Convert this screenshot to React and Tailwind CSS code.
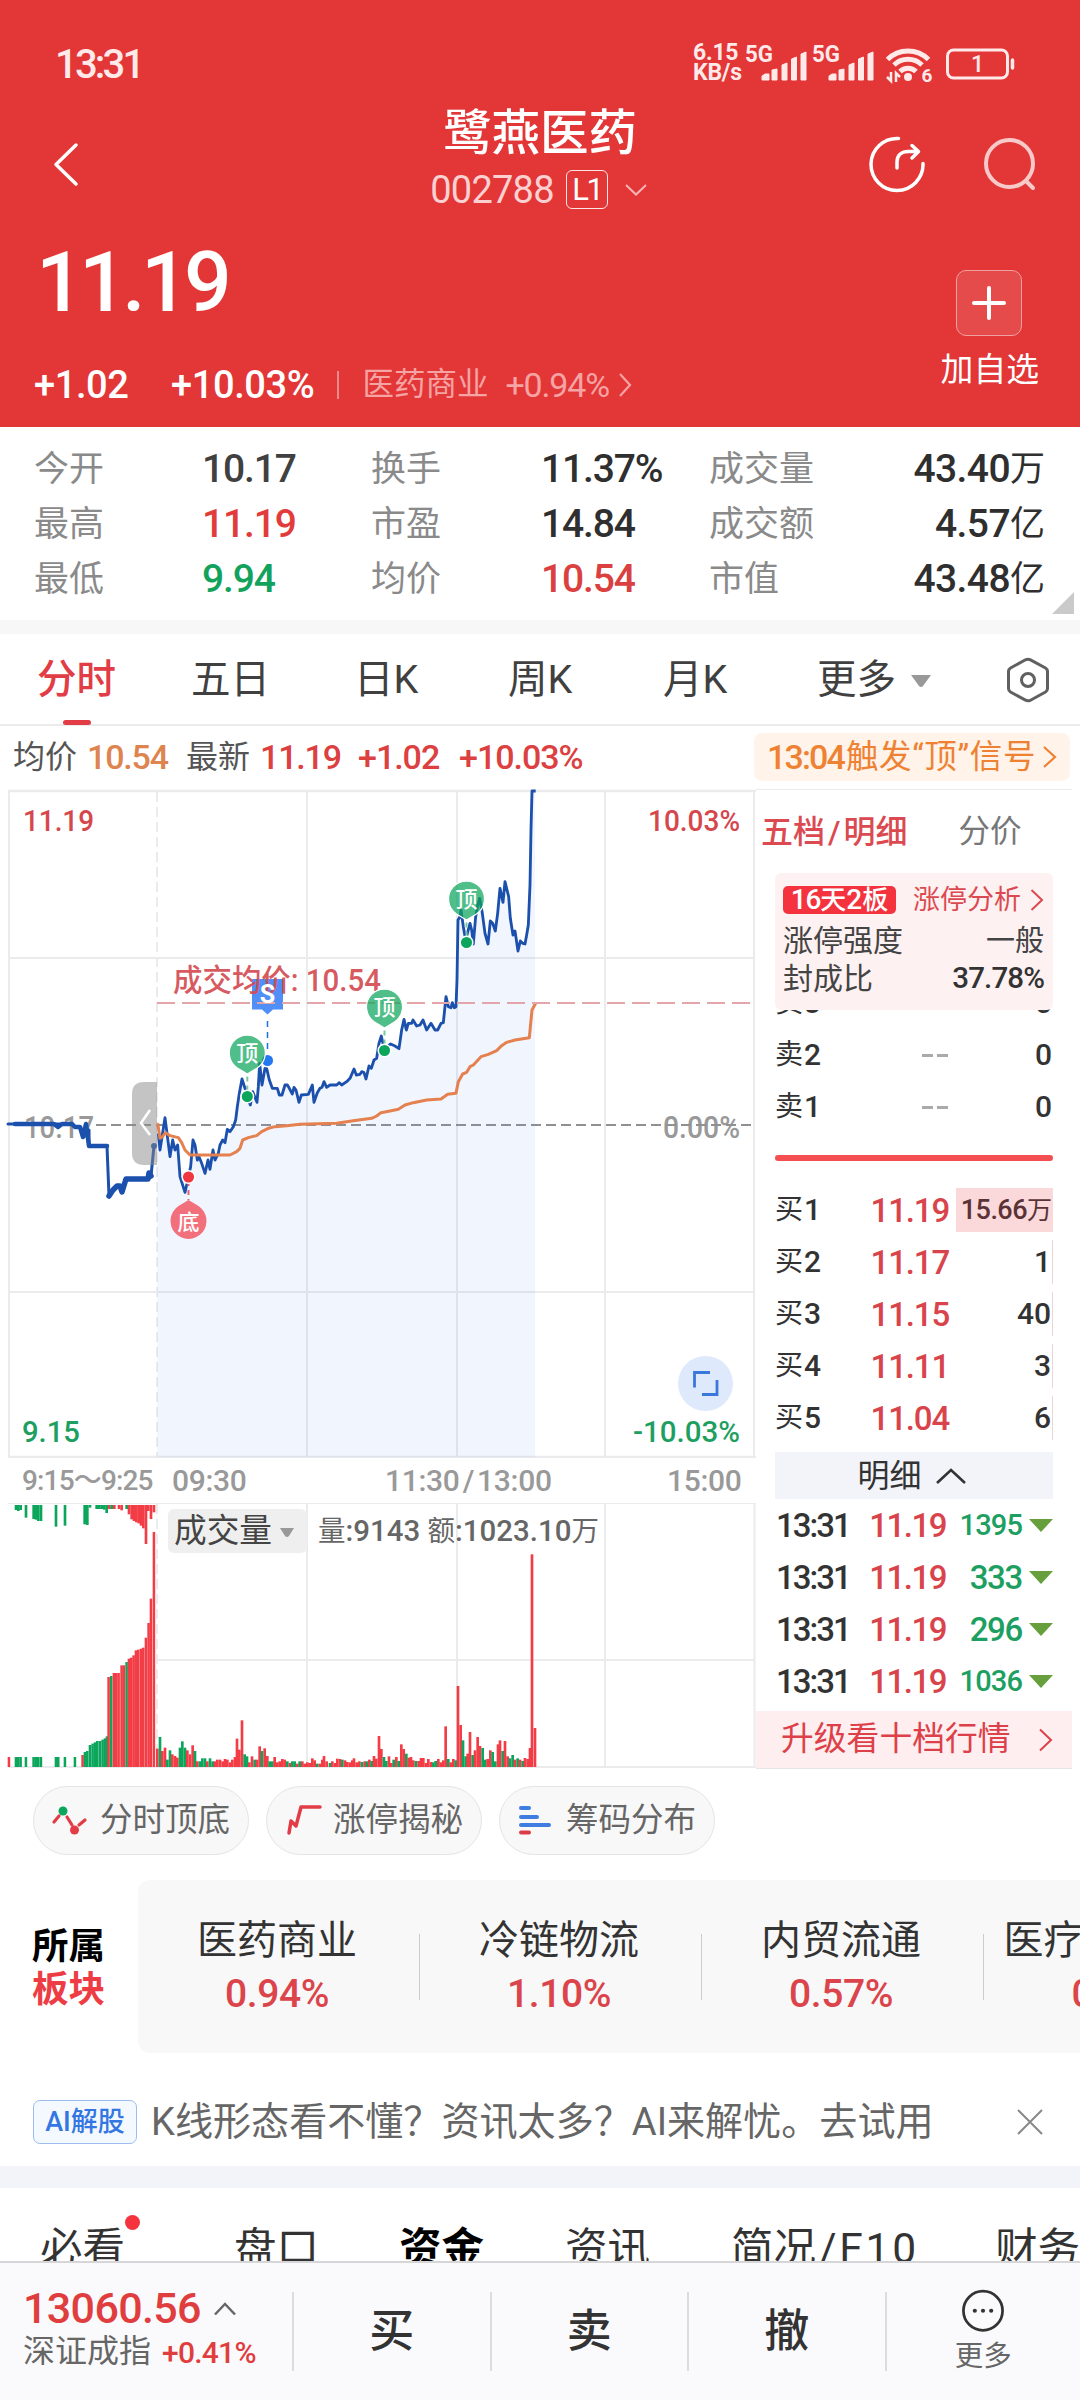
import React from "react";

const RED = "#f23c46";
const GREEN = "#0ca55c";

function Signal() {
  return (
    <svg className="overflow-visible" width="62" height="36" viewBox="0 0 62 36" fill="#ffe9e9">
      <text x="0" y="16" fontSize="23" fontWeight="700" textLength="28" lengthAdjust="spacingAndGlyphs">5G</text>
      <path d="M17 30l3-2h4v6h-7zM27 24l5-1v11h-5zM37 19l5-2v17h-5zM46.500 13l5-2v23h-5zM56 8l5-2v28h-5z" stroke="#ffe9e9" strokeWidth="1" strokeLinejoin="round" />
    </svg>
  );
}

function StatusBar() {
  return (
    <div className="flex h-[100px] items-start text-[#ffe9e9]">
      <span className="ml-[55px] mt-[45px] w-[119px] text-[40px] font-medium leading-none tracking-[-0.07em]">13:31</span>
      <div className="ml-[519px] mt-[43px] w-[52px] text-[23px] font-bold leading-[20px]">
        <div className="tracking-[-0.01em]">6.15</div>
        <div className="tracking-[-0.01em]">KB/s</div>
      </div>
      <div className="mt-[46px] flex gap-[5px]">
        <Signal />
        <Signal />
      </div>
      <svg className="ml-[11px] mt-[46px] overflow-visible" width="50" height="38" viewBox="0 0 50 38" fill="none" stroke="#ffe9e9">
        <path d="M2.500 13.500a29 29 0 0 1 41 0" strokeWidth="5" />
        <path d="M9 19a20 20 0 0 1 28 0" strokeWidth="5" />
        <path d="M15 25.500a11.500 11.500 0 0 1 16 0" strokeWidth="5" />
        <circle cx="23" cy="31" r="4" fill="#ffe9e9" stroke="none" />
        <path d="M6 26v9l-4-4M11 36v-9l4 4" strokeWidth="2.500" />
        <text x="36.500" y="35.500" fill="#ffe9e9" stroke="none" fontSize="19" fontWeight="700">6</text>
      </svg>
      <svg className="ml-[11px] mt-[48px] overflow-visible" width="72" height="32" viewBox="0 0 72 32" fill="none" stroke="#ffe9e9">
        <rect x="1.500" y="2" width="60" height="28" rx="6" strokeWidth="3" />
        <path d="M66.500 12v8" strokeWidth="3.500" strokeLinecap="round" />
        <text x="31.500" y="24" textAnchor="middle" fontSize="23" fontWeight="500" fill="#ffe9e9" stroke="none">1</text>
      </svg>
    </div>
  );
}

function Header() {
  return (
    <header className="flex h-[427px] flex-col bg-[#e33637] text-white">
      <StatusBar />
      <div className="flex h-[130px] items-start">
        <svg className="ml-[50px] mt-[42px]" width="30" height="46" viewBox="0 0 30 46" fill="none" stroke="#fff" strokeWidth="3.500" strokeLinecap="round" strokeLinejoin="round">
          <path d="M26 3L6 22.500L26 42" />
        </svg>
        <div className="ml-[299px] w-[322px] pt-[10px]">
          <div className="text-center text-[48.500px] font-medium leading-none">鹭燕医药</div>
          <div className="mt-[10px] flex h-[42px] items-center justify-center">
            <span className="text-[38px] leading-none tracking-[-0.02em] text-[#fbd0d0]">002788</span>
            <span className="ml-[12px] flex h-[39px] w-[42px] items-center justify-center rounded-[6px] border-[1.500px] border-[#fde4e4] text-[31px] leading-none tracking-[-0.08em]">L1</span>
            <svg className="ml-[16px] mr-[2px]" width="24" height="14" viewBox="0 0 24 14" fill="none" stroke="#f5b3b3" strokeWidth="2">
              <path d="M2 2l10 9.500L22 2" />
            </svg>
          </div>
        </div>
        <svg className="ml-[168px] mt-[35px]" width="58" height="58" viewBox="0 0 58 58" fill="none" stroke="#fff" strokeWidth="3.500" strokeLinecap="round" strokeLinejoin="round">
          <path d="M29.500 3.500A26 26 0 1 0 54 28.500" />
          <path d="M28 33v-6c0-7 5-10.500 11-10.500h10M43 10.500l6.500 6L43 23" />
        </svg>
        <svg className="ml-[56px] mt-[37px]" width="56" height="56" viewBox="0 0 56 56" fill="none" stroke="#f8c9c9" strokeWidth="4" strokeLinecap="round">
          <circle cx="26.500" cy="26.500" r="23.500" />
          <path d="M43 44l7 7" />
        </svg>
      </div>
      <div className="flex h-[197px] justify-between">
        <div className="pl-[34px] pt-[11px]">
          <div className="ml-[2px] text-[84px] font-medium leading-none tracking-[-0.055em]">11.19</div>
          <div className="mt-[39px] flex h-[42px] items-center text-[38px] leading-none">
            <span className="w-[137px] font-medium tracking-[-0.01em]">+1.02</span>
            <span className="w-[166px] font-medium tracking-[-0.01em]">+10.03%</span>
            <span className="h-[28px] w-[1.500px] bg-[#ee8a8a]" />
            <span className="ml-[24px] text-[31.500px] text-[#f5a3a3]">医药商业</span>
            <span className="ml-[17px] text-[34px] tracking-[-0.035em] text-[#f5a3a3]">+0.94%</span>
            <svg className="ml-[8px]" width="16" height="26" viewBox="0 0 16 26" fill="none" stroke="#f5a3a3" strokeWidth="2.200">
              <path d="M3 2l10 11L3 24" />
            </svg>
          </div>
        </div>
        <div className="mr-[41px] flex flex-col items-center pt-[40px]">
          <div className="mr-[2px] flex h-[66px] w-[66px] items-center justify-center rounded-[10px] border-[1.500px] border-[#f1a0a0] bg-[#e64b4c]">
            <svg width="34" height="34" viewBox="0 0 34 34" stroke="#fff" strokeWidth="4" strokeLinecap="round">
              <path d="M17 2v30M2 17h30" />
            </svg>
          </div>
          <div className="mt-[18px] text-[32.800px] leading-none">加自选</div>
        </div>
      </div>
    </header>
  );
}

function Stats() {
  const rows = [
    ["今开", "10.17", "text-[#404040]", "换手", "11.37%", "text-[#2f2f2f]", "成交量", "43.40", "万"],
    ["最高", "11.19", "text-[#e23b3b]", "市盈", "14.84", "text-[#2f2f2f]", "成交额", "4.57", "亿"],
    ["最低", "9.94", "text-[#12a25c]", "均价", "10.54", "text-[#db4040]", "市值", "43.48", "亿"],
  ];
  return (
    <section className="relative h-[193px] pt-[15px]">
      {rows.map((r) => (
        <div key={r[0]} className="flex h-[55px] items-center pl-[34px] pr-[35px] text-[35px] leading-none text-[#8a8a8a]">
          <span className="w-[168px]">{r[0]}</span>
          <span className={"w-[169px] text-[39px] font-medium tracking-[-0.03em] " + r[2]}>{r[1]}</span>
          <span className="w-[170px]">{r[3]}</span>
          <span className={"w-[168px] text-[39px] font-medium tracking-[-0.03em] " + r[5]}>{r[4]}</span>
          <span>{r[6]}</span>
          <span className="ml-auto flex items-center text-[#2f2f2f]">
            <span className="text-[39px] font-medium tracking-[-0.015em]">{r[7]}</span>
            {r[8]}
          </span>
        </div>
      ))}
      <svg className="absolute bottom-[6px] right-[6px]" width="22" height="22" viewBox="0 0 22 22">
        <path d="M22 0v22H0z" fill="#cacaca" />
      </svg>
    </section>
  );
}

function PeriodTabs() {
  return (
    <nav className="flex h-[92px] items-start border-b-2 border-[#ebebeb] pl-[37px] text-[39.500px] leading-none text-[#404040]">
      <div className="flex h-[91px] w-[154px] flex-col pt-[26px] font-medium text-[#e23c46]">
        分时
        <span className="ml-[26px] mt-auto h-[5px] w-[28px] rounded-full bg-[#e23c46]" />
      </div>
      <span className="w-[163px] pt-[26px]">五日</span>
      <span className="w-[154px] pt-[26px]">日K</span>
      <span className="w-[155px] pt-[26px]">周K</span>
      <span className="w-[154px] pt-[26px]">月K</span>
      <span className="pt-[26px]">更多</span>
      <svg className="ml-[14px] mt-[40px]" width="22" height="14" viewBox="0 0 22 14">
        <path d="M1 1h20l-8 11q-2 2-4 0z" fill="#999" />
      </svg>
      <svg className="ml-[74px] mt-[23px]" width="44" height="46" viewBox="0 0 44 46" fill="none" stroke="#606060" strokeWidth="3">
        <path d="M19.500 2.800q2.500-1.300 5 0L39.500 11q2 1.200 2 3.500v17q0 2.300-2 3.500l-15 8.200q-2.500 1.300-5 0L4.500 35q-2-1.200-2-3.500v-17q0-2.300 2-3.500z" />
        <circle cx="22" cy="23" r="6.500" />
      </svg>
    </nav>
  );
}

function InfoRow() {
  return (
    <div className="flex h-[63px] items-center pb-[1px] pl-[13px] text-[32px] leading-none">
      <span className="text-[#555]">均价</span>
      <span className="ml-[10px] w-[99px] text-[34px] font-medium tracking-[-0.035em] text-[#de8450]">10.54</span>
      <span className="text-[#555]">最新</span>
      <span className="ml-[10px] w-[98px] text-[34px] font-medium tracking-[-0.035em] text-[#dc4040]">11.19</span>
      <span className="w-[101px] text-[34px] font-medium tracking-[-0.03em] text-[#dc4040]">+1.02</span>
      <span className="text-[34px] font-medium tracking-[-0.03em] text-[#dc4040]">+10.03%</span>
      <span className="ml-auto mr-[10px] flex h-[48px] w-[316px] items-center rounded-[8px] bg-[#fff3ea] pl-[13px] text-[#ee8232]">
        <span className="text-[34px] font-medium tracking-[-0.055em]">13:04</span>
        <span className="ml-[2px] text-[32.500px] tracking-[0.02em]">触发“顶”信号</span>
        <svg className="ml-[6px]" width="16" height="24" viewBox="0 0 16 24" fill="none" stroke="#ee8232" strokeWidth="2.200">
          <path d="M2 2l11 10L2 22" />
        </svg>
      </span>
    </div>
  );
}

const PRICE =
  "475,1060 480,1110 495,1013 510,1130 518,1080 525,1110 533,1095 540,1190 555,1237 560,1215 572,1160 579,1080 585,1095 592,1140 597,1130 605,1150 615,1180 624,1140 630,1168 639,1110 645,1140 655,1120 660,1095 668,1080 675,1088 682,1048 690,1055 700,1040 707,1020 712,980 718,940 726,897 735,925 742,948 751,975 758,935 771,967 775,920 779,850 786,915 795,865 800,865 808,900 817,925 832,925 838,945 846,945 855,915 862,915 868,925 877,942 882,922 888,930 897,967 904,945 925,943 937,915 942,967 952,938 960,925 966,922 972,905 980,922 990,915 1010,915 1018,908 1025,915 1040,905 1050,895 1062,867 1069,885 1080,883 1085,875 1092,878 1098,897 1107,858 1114,865 1122,840 1130,835 1137,790 1144,768 1150,795 1155,805 1172,792 1185,798 1197,806 1205,750 1212,718 1219,750 1225,730 1235,730 1239,720 1250,738 1260,735 1269,720 1280,750 1293,730 1305,750 1313,750 1323,730 1330,728 1338,650 1345,680 1353,683 1357,668 1363,683 1368,680 1371,600 1374,420 1380,410 1383,390 1390,440 1397,480 1410,430 1415,450 1420,492 1427,410 1433,375 1439,355 1447,400 1455,460 1464,492 1471,423 1478,430 1486,453 1493,400 1500,325 1509,367 1515,305 1526,350 1531,415 1539,465 1545,453 1554,513 1561,483 1568,490 1575,492 1580,465 1585,435 1590,315 1593,150 1596,33 1607,33";
const AVERAGE =
  "473,1030 480,1075 487,1070 497,1058 510,1067 535,1073 545,1088 555,1110 570,1125 630,1125 690,1125 710,1115 720,1105 728,1080 745,1073 770,1067 785,1055 805,1045 825,1040 860,1037 900,1033 1010,1030 1060,1022 1115,1015 1130,1008 1143,998 1170,993 1195,988 1215,975 1240,968 1280,960 1323,957 1343,943 1368,940 1375,905 1388,882 1400,877 1410,860 1420,855 1443,830 1465,823 1490,812 1505,797 1520,787 1545,780 1588,773 1596,690 1607,670";

function TopPin({ x, y, dot }) {
  return (
    <g>
      <path d={`M${x} ${y + 39.500}l-10-6a18 18 0 1 1 20 0z`} fill="#0ca55c" fillOpacity=".72" stroke="#fff" strokeWidth="1.200" />
      <text x={x} y={y + 26} textAnchor="middle" fontSize="22" fontWeight="500" fill="#fff">顶</text>
      <path d={`M${x} ${y + 42}V${dot}`} stroke="#7cc7a4" strokeWidth="2" strokeDasharray="5 4" />
      <circle cx={x} cy={dot} r="6.300" fill="#0ca55c" stroke="#fff" strokeWidth="1.500" />
    </g>
  );
}

function PriceChart() {
  return (
    <div className="relative h-[669px]">
      <svg className="block" width="756" height="669" viewBox="0 789 756 669">
        <g stroke="#ebebed" strokeWidth="2" fill="none">
          <path d="M8 791H756M8 1457H756" strokeWidth="2.500" />
          <path d="M9 790V1457M307 790V1457M457 790V1457M605 790V1457M754 790V1457M9 958H754M9 1292H754" />
          <path d="M157 792V1457" strokeDasharray="10 5" />
        </g>
        <g fontSize="31" fontWeight="500" fill="#999">
          <text x="24" y="1138" textLength="70" lengthAdjust="spacingAndGlyphs">10.17</text>
          <text x="663" y="1138" textLength="77" lengthAdjust="spacingAndGlyphs">0.00%</text>
        </g>
        <path d="M96 1125H752" stroke="#909090" strokeWidth="2" strokeDasharray="10 5" />
        <g transform="translate(0 780) scale(.33333)">
          <polygon points={"472,2031 472,1060 " + PRICE + " 1605,33 1605,2031"} fill="#5a8ff0" fillOpacity=".085" />
          <polyline points={PRICE} fill="none" stroke="#1b50ad" strokeWidth="8.500" strokeLinejoin="round" />
        </g>
        <g fill="none" stroke="#1b50ad" strokeLinecap="round" strokeLinejoin="round">
          <path d="M8 1124H60M89 1146V1130M107 1146L109 1196M151 1176L154 1146" strokeWidth="3" />
          <path d="M15 1124H54L58 1127L62 1124H72L75 1127H80L83 1137L86 1124L89 1146H107" strokeWidth="4.500" />
          <path d="M109 1196L113 1190L117 1186H120L122 1192L126 1179H148L149 1173L151 1176" strokeWidth="5.500" />
          <circle cx="154" cy="1146" r="1.500" strokeWidth="3" />
        </g>
        <path d="M157 1082h-13q-12 0-12 12v59q0 12 12 12h13z" fill="#8a8a8a" fillOpacity=".5" />
        <path d="M150 1110l-9 13 9 12" fill="none" stroke="#fff" strokeWidth="2.500" />
        <polyline transform="translate(0 780) scale(.33333)" points={AVERAGE} fill="none" stroke="#e5804f" strokeWidth="9" strokeLinejoin="round" />
        <path d="M267.500 1021V1055" stroke="#1f6fe0" strokeWidth="1.500" strokeDasharray="6 5" />
        <path d="M252 979h31v30.500h-10l-5.500 5-5.500-5h-10z" fill="#2a76f6" fillOpacity=".82" />
        <circle cx="267.500" cy="1060.500" r="6.300" fill="#2478f2" stroke="#fff" strokeWidth="1.500" />
        <path d="M157 1003H752" stroke="#e4a5aa" strokeWidth="1.800" strokeDasharray="18 7" />
        <text x="173" y="991" fontSize="30.500" fontWeight="500" fill="#d24a50" fillOpacity=".92" textLength="208" lengthAdjust="spacingAndGlyphs">成交均价: 10.54</text>
        <text x="267.500" y="1003" textAnchor="middle" fontSize="25" fontWeight="700" fill="#fff">S</text>
        <TopPin x={247.300} y={1034.500} dot={1096.500} />
        <TopPin x={384.500} y={988.500} dot={1050.500} />
        <TopPin x={466.500} y={880.500} dot={942.500} />
        <path d="M188.500 1181V1200" stroke="#d86a78" strokeWidth="2" strokeDasharray="5 4" />
        <circle cx="188.500" cy="1177" r="6.300" fill="#f0363f" stroke="#fff" strokeWidth="1.500" />
        <path d="M188.500 1200l10 6a18 18 0 1 1-20 0z" fill="#f23c4a" fillOpacity=".72" />
        <text x="188.500" y="1229.500" textAnchor="middle" fontSize="22" fontWeight="500" fill="#fff">底</text>
        <g fontSize="30" fontWeight="500" fill="#d5474c">
          <text x="23" y="831" textLength="71" lengthAdjust="spacingAndGlyphs">11.19</text>
          <text x="648" y="831" textLength="92" lengthAdjust="spacingAndGlyphs">10.03%</text>
        </g>
        <g fontSize="30" fontWeight="500" fill="#1e9f62">
          <text x="22" y="1442" textLength="58" lengthAdjust="spacingAndGlyphs">9.15</text>
          <text x="633" y="1442" textLength="107" lengthAdjust="spacingAndGlyphs">-10.03%</text>
        </g>
        <circle cx="705.500" cy="1383.500" r="27.500" fill="#dfe9fc" />
        <path d="M710 1372.500H694.500V1387.500M702 1394.500H717V1380" fill="none" stroke="#3a78dc" strokeWidth="2.800" />
      </svg>
    </div>
  );
}

const VOLUME =
  "472r55 480g90 487r48 495r58 502g22 510g50 517r38 525r33 532r28 540g58 547g77 555g58 562r50 570r38 578r65 585g48 592r17 600g17 607g26 615g26 622r17 630g26 638g17 645r17 652r22 660r22 668r17 675r24 682r22 690r14 697r22 705r30 711r85 718r52 726r140 734g38 741g32 748r14 756r32 764g22 771r22 779r62 786g48 794r56 802r33 809g17 817g17 824r30 832r14 839r17 847r24 854r22 862g17 870r12 877g17 884g17 892r10 899g17 907r17 914r10 922r14 929r12 937r26 944r20 952g10 960r10 967r22 972r33 980r17 990g12 997r17 1005r12 1012r25 1020r24 1027g22 1035r20 1042r15 1050r14 1057r20 1062r26 1070r14 1078r17 1086g15 1094r17 1101g17 1108r22 1115g18 1122r33 1129r25 1137r93 1144r54 1152g30 1159g18 1167r32 1174r12 1181g22 1189r30 1196g18 1204r68 1211r54 1219g40 1226r28 1233r30 1240r20 1248g18 1256r18 1263r27 1270r27 1278r12 1285r24 1293r15 1300g14 1307g18 1315r24 1322r14 1330r20 1337r122 1345g24 1352r14 1360r24 1367g20 1374r243 1382r126 1389g80 1397g32 1403r40 1410r105 1418g36 1425r50 1433r90 1440r63 1448g57 1456g22 1463r24 1471r50 1478g45 1486g17 1494r68 1500r80 1508g48 1515r78 1523r32 1530g26 1538g36 1545r22 1553g26 1560r22 1568g18 1575r27 1583r24 1590r57 1596r638 1605r117";
const AUCTION =
  "27r30 48g30 55g30 62g30 78g30 101g30 108g30 115g30 123g30 168g30 175g30 195g30 225g30 248r36 255g45 262g48 270g66 278g70 285g74 292g78 300g78 308g82 315g86 321g92 326r270 334g273 342r282 349r282 356r282 365r305 372r305 380g315 387r325 394r328 401r335 408r350 415r352 423r355 430r358 438r388 446r432 453r505 462r705";
const UNMATCHED =
  "48g15 55g18 62g15 78g38 101g42 108g44 115g48 123g48 168g65 195g62 254g58 262g60 270g8 290g12 298g12 305g12 313g14 320g24 328r12 335g12 343r12 357r12 365r16 380g12 387r28 395r43 402r48 409r52 416r55 423r62 430r70 438r117 445r18 453r42 462r22";

const bars = (s) =>
  s.split(" ").map((t) => {
    const [x, h] = t.split(/[rg]/).map(Number);
    return { x, h, up: t.includes("r") };
  });

function VolumeChart() {
  return (
    <svg className="block" width="756" height="266" viewBox="0 1503 756 266">
      <g stroke="#ebebed" strokeWidth="2" fill="none">
        <path d="M8 1503H756M8 1767H756M157 1660H754M307 1504V1767M457 1504V1767M605 1504V1767M754.500 1504V1767" />
        <path d="M157 1504V1767" strokeDasharray="10 5" />
      </g>
      <rect x="168" y="1509" width="139" height="44" rx="6" fill="#efefef" />
      <text x="174" y="1542" fontSize="33" fill="#444" textLength="98" lengthAdjust="spacingAndGlyphs">成交量</text>
      <path d="M280 1528h14l-5 8q-2 2-4 0z" fill="#999" />
      <text x="318" y="1541" fontSize="30" fontWeight="500" fill="#666" textLength="281" lengthAdjust="spacingAndGlyphs">
        <tspan fontSize="28" fontWeight="400">量</tspan>:9143 <tspan fontSize="28" fontWeight="400">额</tspan>:1023.10<tspan fontSize="28" fontWeight="400">万</tspan>
      </text>
      <g transform="translate(0 1280) scale(.33333)">
        {bars(UNMATCHED).map((b, i) => (
          <rect key={i} x={b.x - 4} y={675} width="8" height={b.h} fill={b.up ? RED : GREEN} />
        ))}
        {bars(AUCTION).map((b, i) => (
          <rect key={i} x={b.x - 4} y={1461 - b.h} width="7.600" height={b.h} fill={b.up ? RED : GREEN} />
        ))}
        {bars(VOLUME).map((b, i) => (
          <rect key={i} x={b.x - 4} y={1461 - b.h} width="8" height={b.h} fill={b.up ? RED : GREEN} />
        ))}
      </g>
    </svg>
  );
}

function ChartColumn() {
  return (
    <div className="w-[756px]">
      <PriceChart />
      <div className="flex h-[45px] items-center text-[30px] font-medium leading-none text-[#999]">
        <span className="ml-[22px] w-[150px] text-[28px] tracking-[-0.03em]">9:15～9:25</span>
        <span className="w-[213px] tracking-[-0.01em]">09:30</span>
        <span className="w-[282px] tracking-[-0.01em]">11:30<span className="mx-[3px]">/</span>13:00</span>
        <span className="tracking-[-0.01em]">15:00</span>
      </div>
      <VolumeChart />
    </div>
  );
}

function OrderRow({ label, price, vol, none, big }) {
  return (
    <div className="flex h-[52px] items-center text-[28px] leading-none text-[#333]">
      <span className="flex w-[70px] items-center">
        {label[0]}
        <span className="ml-[1px] text-[30px] font-medium">{label[1]}</span>
      </span>
      {none ? (
        <span className="flex w-[103px] justify-end gap-[4px]">
          <span className="h-[3px] w-[11px] bg-[#aaa]" />
          <span className="h-[3px] w-[11px] bg-[#aaa]" />
        </span>
      ) : (
        <span className="w-[104px] text-right text-[33px] font-medium tracking-[-0.035em] text-[#d9444c]">{price}</span>
      )}
      {big ? (
        <span className="ml-auto flex h-[44px] w-[97px] items-center justify-end bg-[#fbd8da] pr-[1px] text-[25px] text-[#5a3336]">
          <span className="text-[27px] font-medium tracking-[-0.02em]">15.66</span>万
        </span>
      ) : (
        <span className={"ml-auto flex h-[44px] items-center pr-px text-[30px] font-medium " + (none ? "" : "border-r border-[#ecd3d5]")}>{vol}</span>
      )}
    </div>
  );
}

function OrderBook() {
  return (
    <aside className="flex w-[324px] flex-col">
      <div className="mr-[8px] flex h-[84px] items-start border-t border-[#ebebeb] pl-[5px] pt-[26px] text-[32px] leading-none">
        <span className="font-medium text-[#db4a50]">五档<span className="mx-[3px]">/</span>明细</span>
        <span className="ml-[51px] text-[31.500px] text-[#777]">分价</span>
      </div>
      <div className="ml-[19px] mr-[27px] flex flex-col">
        <div className="relative z-10 h-[137px] rounded-[6px] bg-[#fef1f1] px-[9px] pt-[13px] leading-none">
          <div className="flex h-[28px] items-center">
            <span className="-ml-[1px] flex h-[28px] w-[113px] items-center justify-center rounded-[5px] bg-[#f4333f] text-[26px] font-medium text-white">
              <span className="text-[28px] tracking-[-0.04em]">16</span>天<span className="text-[28px]">2</span>板
            </span>
            <span className="ml-auto text-[27px] text-[#db4a50]">涨停分析</span>
            <svg className="ml-[9px]" width="14" height="22" viewBox="0 0 14 22" fill="none" stroke="#db4a50" strokeWidth="2">
              <path d="M1.500 1L12 11L1.500 21" />
            </svg>
          </div>
          <div className="mt-[8px] flex h-[38px] items-center justify-between text-[30px] text-[#444]">
            <span className="-ml-[1px]">涨停强度</span>
            <span className="text-[29px]">一般</span>
          </div>
          <div className="flex h-[38px] items-center justify-between text-[30px] text-[#444]">
            <span className="-ml-[1px]">封成比</span>
            <span className="text-[29.500px] font-medium tracking-[-0.03em] text-[#333]">37.78%</span>
          </div>
        </div>
        <div className="-mt-[33px]">
          <OrderRow label="卖3" none vol="0" />
          <OrderRow label="卖2" none vol="0" />
          <OrderRow label="卖1" none vol="0" />
        </div>
        <div className="mt-[22px] h-[6px] rounded-full bg-[#f44d52]" />
        <div className="mt-[23px]">
          <OrderRow label="买1" price="11.19" big />
          <OrderRow label="买2" price="11.17" vol="1" />
          <OrderRow label="买3" price="11.15" vol="40" />
          <OrderRow label="买4" price="11.11" vol="3" />
          <OrderRow label="买5" price="11.04" vol="6" />
        </div>
        <div className="mt-[8px] flex h-[47px] items-center justify-center bg-[#f3f4f9] pr-[4px] text-[32px] leading-none text-[#333]">
          明细
          <svg className="ml-[13px]" width="32" height="18" viewBox="0 0 32 18" fill="none" stroke="#333" strokeWidth="2.600">
            <path d="M2 16L16 3l14 13" />
          </svg>
        </div>
        {["1395", "333", "296", "1036"].map((v) => (
          <div key={v} className="flex h-[52px] items-center text-[33px] font-medium leading-none">
            <span className="w-[78px] whitespace-nowrap pl-[1px] tracking-[-0.06em] text-[#333]">13:31</span>
            <span className="w-[93px] text-right tracking-[-0.045em] text-[#d9444c]">11.19</span>
            <span className={"w-[76px] text-right text-[#1e9f62] " + (v.length > 3 ? "text-[29px] tracking-[-0.03em]" : "text-[33px] tracking-[-0.04em]")}>{v}</span>
            <svg className="ml-[7px]" width="24" height="13" viewBox="0 0 24 13">
              <path d="M0 0h24L12 13z" fill="#669f3b" />
            </svg>
          </div>
        ))}
      </div>
      <div className="mr-[8px] mt-auto flex h-[58px] items-center border-b border-[#e6e6e6] bg-[#feeeef] pl-[25px] text-[32.800px] leading-none text-[#dd4048]">
        升级看十档行情
        <svg className="ml-[28px]" width="14" height="24" viewBox="0 0 14 24" fill="none" stroke="#dd4048" strokeWidth="2">
          <path d="M1 1.500L12 12L1 22.500" />
        </svg>
      </div>
    </aside>
  );
}

function Pill({ children, label }) {
  return (
    <div className="flex h-[69px] w-[216px] items-center rounded-full border border-[#e4e4e4] bg-[#f8f8f8] pl-[17px] text-[32.500px] leading-none text-[#666]">
      <svg className="mr-[11px]" width="38" height="36" viewBox="0 0 38 36" fill="none" strokeLinecap="round" strokeLinejoin="round">
        {children}
      </svg>
      {label}
    </div>
  );
}

function Pills() {
  return (
    <div className="flex h-[111px] gap-[17px] pl-[33px] pt-[17px]">
      <Pill label="分时顶底">
        <path d="M3 19l5-6M16 14l5 8M28 22l6-5" stroke="#e23c46" strokeWidth="3.200" />
        <circle cx="12" cy="8" r="4.500" fill="#0ca55c" />
        <circle cx="23.500" cy="27" r="4.500" fill="#e23c46" />
      </Pill>
      <Pill label="涨停揭秘">
        <path d="M5 30l2-12 5 5 5-19h19" stroke="#e23c46" strokeWidth="3.500" />
      </Pill>
      <Pill label="筹码分布">
        <path d="M4 5h8M4 14h16M4 22h28" stroke="#3f7de0" strokeWidth="4" />
        <path d="M4 29.500h8" stroke="#dc3c48" strokeWidth="4" />
      </Pill>
    </div>
  );
}

function Sectors() {
  const items = [
    ["医药商业", "0.94%"],
    ["冷链物流", "1.10%"],
    ["内贸流通", "0.57%"],
    ["医疗器械概念", "0.82%"],
  ];
  return (
    <section className="flex h-[173px]">
      <div className="w-[138px] pl-[32px] pt-[45px] text-[36.500px] font-bold leading-[43px] text-black">
        <div>所属</div>
        <div className="text-[#ee3c45]">板块</div>
      </div>
      <div className="flex flex-1 overflow-hidden rounded-l-[12px] bg-[#f8f8f8]">
        {items.map(([n, v], i) => (
          <div key={n} className="flex w-[282px] shrink-0 items-center">
            <div className="flex-1 whitespace-nowrap pr-[3px] pt-[2px] text-center leading-none">
              <div className="text-[40px] text-[#333]">{n}</div>
              <div className="mt-[14px] text-[39px] font-medium tracking-[-0.01em] text-[#db444b]">{v}</div>
            </div>
            {i < 3 && <span className="h-[66px] w-px bg-[#ccc]" />}
          </div>
        ))}
      </div>
    </section>
  );
}

function AiBanner() {
  return (
    <div className="flex h-[113px] items-start pl-[33px] pt-[47px]">
      <span className="flex h-[44px] w-[104px] items-center justify-center rounded-[7px] border-[1.500px] border-[#9cbdee] bg-[#f3f9ff] text-[27px] font-medium leading-none text-[#3577e2]">AI解股</span>
      <span className="ml-[14px] mt-[3px] whitespace-nowrap text-[38.100px] leading-none text-[#666]">K线形态看不懂？资讯太多？AI来解忧。去试用</span>
      <svg className="ml-auto mr-[37px] mt-[9px]" width="26" height="26" viewBox="0 0 26 26" stroke="#888" strokeWidth="2">
        <path d="M1 1l24 24M25 1L1 25" />
      </svg>
    </div>
  );
}

function DetailTabs() {
  return (
    <nav className="flex h-[73px] items-start overflow-hidden whitespace-nowrap pl-[40px] pt-[40px] text-[42.500px] leading-none text-[#333]">
      <span className="relative w-[194px]">
        必看
        <span className="absolute left-[85px] -top-[13px] h-[15px] w-[15px] rounded-full bg-[#f4333f]" />
      </span>
      <span className="w-[165px]">盘口</span>
      <span className="w-[166px] font-bold text-black">资金</span>
      <span className="w-[166px]">资讯</span>
      <span className="w-[264px]">简况<span className="ml-[3px] tracking-[0.065em]">/F10</span></span>
      <span>财务</span>
    </nav>
  );
}

function BottomBar() {
  return (
    <footer className="flex h-[139px] items-start border-t-2 border-[#d6d6d8] bg-[#fafafc] leading-none">
      <div className="w-[292px] pl-[23px] pt-[24px]">
        <div className="flex items-center text-[43px] font-medium text-[#e03e3e]">
          <span className="tracking-[-0.015em]">13060.56</span>
          <svg className="ml-[12px]" width="24" height="14" viewBox="0 0 24 14" fill="none" stroke="#666" strokeWidth="2.500">
            <path d="M2 12.500L12 2l10 10.500" />
          </svg>
        </div>
        <div className="mt-[3px] flex items-center text-[32px] text-[#666]">
          深证成指<span className="ml-[11px] mt-[5px] text-[30px] font-medium tracking-[-0.025em] text-[#e03e3e]">+0.41%</span>
        </div>
      </div>
      {["买", "卖", "撤"].map((t) => (
        <div key={t} className="mt-[29px] flex h-[79px] w-[197.500px] items-center justify-center border-l-2 border-[#dcdcde] text-[45px] font-medium text-[#333]">
          {t}
        </div>
      ))}
      <div className="mt-[29px] flex h-[79px] flex-1 justify-center border-l-2 border-[#dcdcde]">
        <div className="flex flex-col items-center text-[28.500px] text-[#666]">
          <svg className="-mt-[4px]" width="50" height="50" viewBox="0 0 50 50">
            <circle cx="25" cy="25" r="21.500" fill="none" stroke="#333" strokeWidth="3" />
            <g fill="#333"><circle cx="16" cy="25" r="2.300" /><circle cx="25" cy="25" r="2.300" /><circle cx="34" cy="25" r="2.300" /></g>
          </svg>
          <span className="mt-[9px]">更多</span>
        </div>
      </div>
    </footer>
  );
}

export default function App() {
  return (
    <div className="flex h-[2400px] w-[1080px] flex-col overflow-hidden bg-white font-['Roboto','Noto_Sans_CJK_SC',sans-serif]">
      <Header />
      <Stats />
      <div className="h-[14px] bg-[#f7f7f7]" />
      <PeriodTabs />
      <InfoRow />
      <div className="flex h-[980px] shrink-0">
        <ChartColumn />
        <OrderBook />
      </div>
      <Pills />
      <Sectors />
      <AiBanner />
      <div className="h-[22px] bg-[#f3f4f9]" />
      <DetailTabs />
      <BottomBar />
    </div>
  );
}
